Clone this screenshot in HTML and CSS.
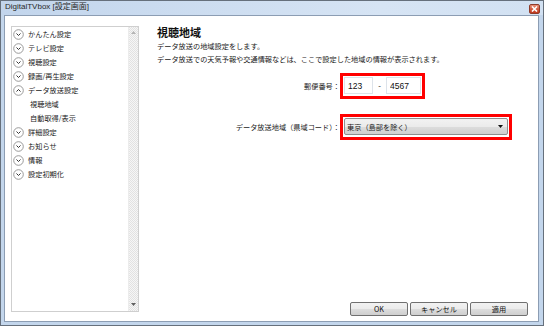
FILE: index.html
```html
<!DOCTYPE html>
<html lang="ja">
<head>
  <meta charset="UTF-8" />
  <title>DigitalTVbox [設定画面]</title>
  <link rel="stylesheet" href="styles.css">
</head>
<body>

  <div class="window">
    <!-- Title bar -->
    <div class="titlebar">
      <span class="title">DigitalTVbox [設定画面]</span>
      <span class="close-btn">
        <svg width="7" height="6" viewBox="0 0 7 6"><path d="M1 0.5 L6 5.5 M6 0.5 L1 5.5" stroke="#fff" stroke-width="1.6"/></svg>
      </span>
    </div>

    <div class="client">
      <!-- Menu tree -->
      <div class="tree">
        <ul class="tree-list">
          <li class="tree-item"><svg class="chev" width="11" height="11" viewBox="0 0 11 11"><circle cx="5.5" cy="5.5" r="4.8"/><path d="M3.5 4.5 L5.5 6.5 L7.5 4.5"/></svg>かんたん設定</li>
          <li class="tree-item"><svg class="chev" width="11" height="11" viewBox="0 0 11 11"><circle cx="5.5" cy="5.5" r="4.8"/><path d="M3.5 4.5 L5.5 6.5 L7.5 4.5"/></svg>テレビ設定</li>
          <li class="tree-item"><svg class="chev" width="11" height="11" viewBox="0 0 11 11"><circle cx="5.5" cy="5.5" r="4.8"/><path d="M3.5 4.5 L5.5 6.5 L7.5 4.5"/></svg>視聴設定</li>
          <li class="tree-item"><svg class="chev" width="11" height="11" viewBox="0 0 11 11"><circle cx="5.5" cy="5.5" r="4.8"/><path d="M3.5 4.5 L5.5 6.5 L7.5 4.5"/></svg>録画/再生設定</li>
          <li class="tree-item"><svg class="chev" width="11" height="11" viewBox="0 0 11 11"><circle cx="5.5" cy="5.5" r="4.8"/><path d="M3.5 6.5 L5.5 4.5 L7.5 6.5"/></svg>データ放送設定</li>
          <li class="tree-sub">視聴地域</li>
          <li class="tree-sub">自動取得/表示</li>
          <li class="tree-item"><svg class="chev" width="11" height="11" viewBox="0 0 11 11"><circle cx="5.5" cy="5.5" r="4.8"/><path d="M3.5 4.5 L5.5 6.5 L7.5 4.5"/></svg>詳細設定</li>
          <li class="tree-item"><svg class="chev" width="11" height="11" viewBox="0 0 11 11"><circle cx="5.5" cy="5.5" r="4.8"/><path d="M3.5 4.5 L5.5 6.5 L7.5 4.5"/></svg>お知らせ</li>
          <li class="tree-item"><svg class="chev" width="11" height="11" viewBox="0 0 11 11"><circle cx="5.5" cy="5.5" r="4.8"/><path d="M3.5 4.5 L5.5 6.5 L7.5 4.5"/></svg>情報</li>
          <li class="tree-item"><svg class="chev" width="11" height="11" viewBox="0 0 11 11"><circle cx="5.5" cy="5.5" r="4.8"/><path d="M3.5 4.5 L5.5 6.5 L7.5 4.5"/></svg>設定初期化</li>
        </ul>
        <div class="scrollbar">
          <svg class="arrow up" width="5" height="3" viewBox="0 0 5 3"><path d="M0 3 L2.5 0 L5 3 Z"/></svg>
          <svg class="arrow down" width="5" height="3" viewBox="0 0 5 3"><path d="M0 0 L5 0 L2.5 3 Z"/></svg>
        </div>
      </div>

      <!-- Settings pane -->
      <div class="pane">
        <h1>視聴地域</h1>
        <p class="desc">データ放送の地域設定をします。<br>データ放送での天気予報や交通情報などは、ここで設定した地域の情報が表示されます。</p>

        <div class="form">
          <label class="form-label">郵便番号：</label>
          <div class="highlight">
            <input class="zip zip1" type="text" value="123">
            <span class="dash">-</span>
            <input class="zip zip2" type="text" value="4567">
          </div>

          <label class="form-label">データ放送地域（県域コード）：</label>
          <div class="highlight">
            <div class="combo">
              <span>東京（島部を除く）</span>
              <svg width="5" height="3" viewBox="0 0 5 3"><path d="M0 0 L5 0 L2.5 3 Z"/></svg>
            </div>
          </div>
        </div>

        <div class="buttons">
          <button class="btn">OK</button>
          <button class="btn">キャンセル</button>
          <button class="btn">適用</button>
        </div>
      </div>
    </div>
  </div>

</body>
</html>
```

FILE: styles.css
```css
body {
  margin: 0;
  font-family: "Noto Sans CJK JP", "Noto Sans", sans-serif;
  font-size: 7.2px;
  color: #1a1a1a;
}

.window {
  width: 544px;
  height: 326px;
  box-sizing: border-box;
  border: 1px solid #66707c;
  background: #c3d6ec;
  padding: 0 4px 3px 3px;
  display: flex;
  flex-direction: column;
}

/* Title bar */
.titlebar {
  height: 14px;
  display: flex;
  justify-content: space-between;
  align-items: flex-start;
  background: linear-gradient(to right, #c2d5ec, #d6e4f4 70%, #d2e1f2);
  margin: 0 -4px 0 -3px;
  padding: 0 3px 0 4px;
}

.title {
  font-family: "Liberation Sans", "Noto Sans CJK JP", sans-serif;
  font-size: 8px;
  line-height: 12px;
  color: #2a2a2a;
}

.close-btn {
  margin-top: 3px;
  width: 11px;
  height: 10px;
  box-sizing: border-box;
  border: 1px solid #8e3b2a;
  border-radius: 2px;
  background: linear-gradient(#e7917b, #d35c40 50%, #c0391f);
  display: flex;
  align-items: center;
  justify-content: center;
}

/* Client area */
.client {
  flex: 1;
  background: #fff;
  border: 1px solid #8c9db3;
  padding: 10px 10px 5px 6px;
  display: flex;
}

.tree {
  width: 128px;
  height: 286px;
  box-sizing: border-box;
  border: 1px solid #cfcfcf;
  display: flex;
  flex-shrink: 0;
}

.tree-list {
  list-style: none;
  margin: 0;
  padding: 0;
  flex: 1;
}

.tree-item,
.tree-sub {
  height: 14px;
  display: flex;
  align-items: center;
  white-space: nowrap;
}

.tree-item {
  padding-left: 1px;
}

.tree-sub {
  padding-left: 18px;
}

.chev {
  margin-right: 4px;
}

.chev circle {
  fill: #fff;
  stroke: #8f8f8f;
  stroke-width: 0.9;
}

.chev path {
  fill: none;
  stroke: #333;
  stroke-width: 1;
}

.scrollbar {
  width: 9px;
  background: repeating-conic-gradient(#f6f6f6 0 25%, #e2e2e2 0 50%) 0 0 / 2px 2px;
  border-left: 1px solid #ececec;
  display: flex;
  flex-direction: column;
  justify-content: space-between;
  align-items: center;
  padding: 4px 0 5px;
}

.arrow.up {
  fill: #b5b5b5;
}

.arrow.down {
  fill: #606060;
}

/* Right pane */
.pane {
  flex: 1;
  margin-left: 18px;
  display: flex;
  flex-direction: column;
}

.pane h1 {
  margin: 0;
  font-size: 11px;
  line-height: 13px;
  font-weight: bold;
  color: #111;
}

.desc {
  margin: 1px 0 0;
  line-height: 13px;
  white-space: nowrap;
}

.form {
  margin-top: 7px;
  display: grid;
  grid-template-columns: 183px auto;
  row-gap: 15px;
  align-items: center;
  justify-items: start;
}

.form-label {
  justify-self: end;
  white-space: nowrap;
}

.highlight {
  border: 3px solid #ff0000;
  padding: 1px 1px 2px;
  display: flex;
  align-items: center;
}

.zip {
  height: 17px;
  box-sizing: border-box;
  border: 1px solid #dde3ea;
  padding: 0 3px;
  font-family: "Liberation Sans", sans-serif;
  font-size: 8.5px;
  color: #111;
  outline: none;
}

.zip1 {
  width: 29px;
}

.zip2 {
  width: 35px;
}

.dash {
  width: 13px;
  text-align: center;
  font-family: "Liberation Sans", sans-serif;
  font-size: 8px;
}

.combo {
  width: 164px;
  height: 17px;
  box-sizing: border-box;
  border: 1px solid #8e8f8f;
  border-radius: 2px;
  background: linear-gradient(#f2f2f2, #ebebeb 50%, #dddddd 50%, #cfcfcf);
  display: flex;
  align-items: center;
  justify-content: space-between;
  padding: 0 4px 0 2px;
}

.combo svg {
  fill: #111;
}

.buttons {
  margin-top: auto;
  display: flex;
  justify-content: flex-end;
  gap: 2px;
}

.btn {
  width: 58px;
  height: 14px;
  padding: 0;
  border: 1px solid #707070;
  border-radius: 2px;
  background: linear-gradient(#f2f2f2, #ebebeb 50%, #dddddd 50%, #cfcfcf);
  font-family: "Noto Sans CJK JP", sans-serif;
  font-size: 7.2px;
  line-height: 12px;
  color: #111;
}
```
